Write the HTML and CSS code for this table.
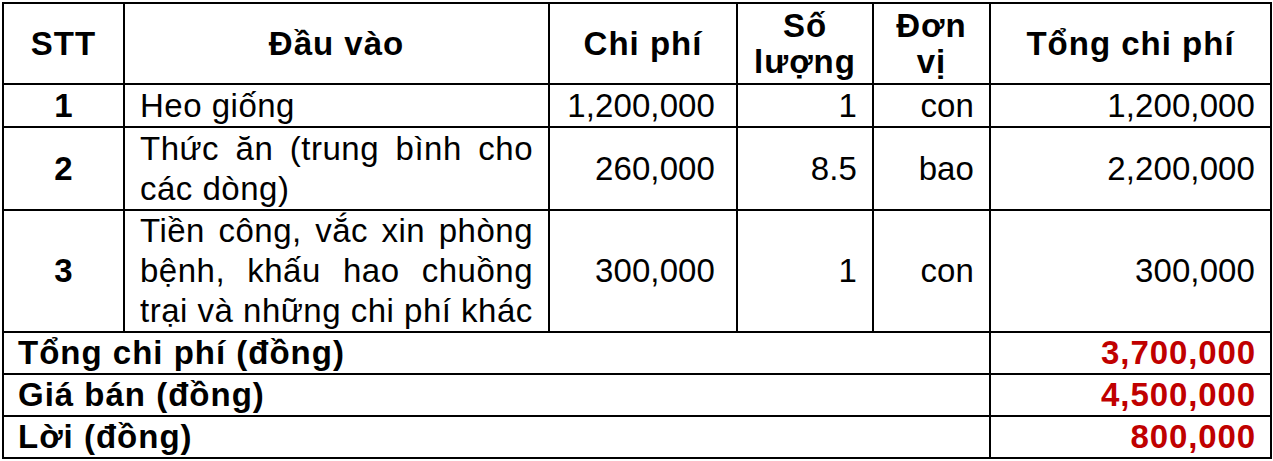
FILE: index.html
```html
<!DOCTYPE html>
<html lang="vi">
<head>
<meta charset="utf-8">
<title>Chi phí nuôi heo</title>
<link rel="stylesheet" href="styles.css">
</head>
<body>
<table class="cost">
  <colgroup>
    <col class="c-stt">
    <col class="c-item">
    <col class="c-price">
    <col class="c-qty">
    <col class="c-unit">
    <col class="c-total">
  </colgroup>
  <thead>
    <tr class="r-head">
      <th>STT</th>
      <th>Đầu vào</th>
      <th>Chi phí</th>
      <th>Số<br>lượng</th>
      <th>Đơn<br>vị</th>
      <th>Tổng chi phí</th>
    </tr>
  </thead>
  <tbody>
    <tr class="r-1">
      <td class="stt">1</td>
      <td class="item">Heo giống</td>
      <td class="price">1,200,000</td>
      <td class="num">1</td>
      <td class="num">con</td>
      <td class="num">1,200,000</td>
    </tr>
    <tr class="r-2">
      <td class="stt">2</td>
      <td class="item"><span class="jl">Thức ăn (trung bình cho</span><span class="ll">các dòng)</span></td>
      <td class="price">260,000</td>
      <td class="num">8.5</td>
      <td class="num">bao</td>
      <td class="num">2,200,000</td>
    </tr>
    <tr class="r-3">
      <td class="stt">3</td>
      <td class="item"><span class="jl">Tiền công, vắc xin phòng</span><span class="jl">bệnh, khấu hao chuồng</span><span class="ll">trại và những chi phí khác</span></td>
      <td class="price">300,000</td>
      <td class="num">1</td>
      <td class="num">con</td>
      <td class="num">300,000</td>
    </tr>
    <tr class="r-sum">
      <td class="label" colspan="5">Tổng chi phí (đồng)</td>
      <td class="red">3,700,000</td>
    </tr>
    <tr class="r-sum">
      <td class="label" colspan="5">Giá bán (đồng)</td>
      <td class="red">4,500,000</td>
    </tr>
    <tr class="r-sum">
      <td class="label" colspan="5">Lời (đồng)</td>
      <td class="red">800,000</td>
    </tr>
  </tbody>
</table>
</body>
</html>
```

FILE: styles.css
```css
html, body {
  margin: 0;
  padding: 0;
  background: #ffffff;
}

body {
  padding: 2px 0 0 2px;
  font-family: "Liberation Sans", Arial, sans-serif;
  color: #000000;
}

.cost {
  border-collapse: collapse;
  table-layout: fixed;
  width: 1270px;
  font-size: 33px;
  line-height: 40px;
}

.c-stt { width: 121px; }
.c-item { width: 425px; }
.c-price { width: 188px; }
.c-qty { width: 136px; }
.c-unit { width: 117px; }
.c-total { width: 281px; }

.cost th,
.cost td {
  border: 2px solid #000000;
  padding: 0 15px;
  vertical-align: middle;
}

.cost td {
  letter-spacing: 0.1px;
}

.cost th {
  font-weight: bold;
  text-align: center;
  line-height: 36px;
  letter-spacing: 1px;
}

.r-head { height: 81px; }
.r-1 { height: 43px; }
.r-2 { height: 83px; }
.r-3 { height: 121px; }
.r-sum { height: 42px; }

.stt {
  text-align: center;
  font-weight: bold;
}

.item {
  text-align: left;
  letter-spacing: 0.5px !important;
}

.jl {
  display: block;
  text-align: justify;
  text-align-last: justify;
}

.ll {
  display: block;
  text-align: left;
}

.price {
  text-align: right;
  padding-right: 21px !important;
}

.num {
  text-align: right;
}

.label {
  font-weight: bold;
  text-align: left;
  padding-left: 14px !important;
  letter-spacing: 1px !important;
}

.red {
  font-weight: bold;
  color: #c00000;
  text-align: right;
  letter-spacing: 0.9px !important;
  padding-right: 14px !important;
}
```
